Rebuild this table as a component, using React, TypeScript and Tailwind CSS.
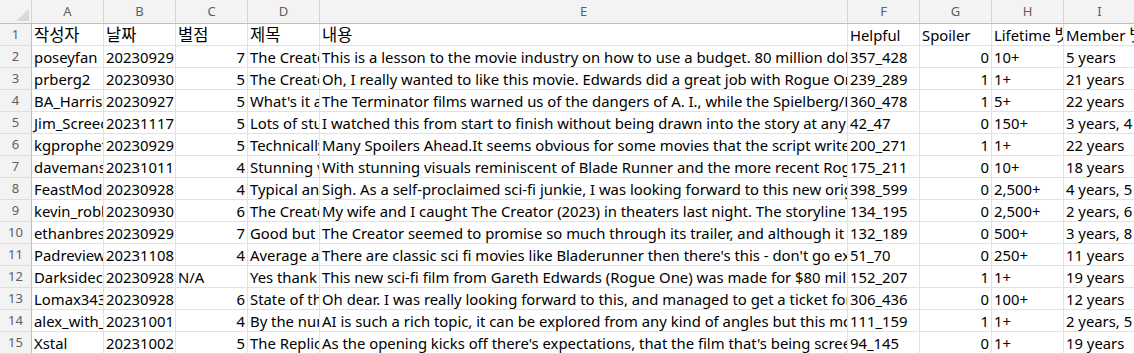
import React from "react";

const cols = ["A", "B", "C", "D", "E", "F", "G", "H", "I"];
const widths = ["w-[72px]", "w-[72px]", "w-[72px]", "w-[72px]", "w-[528px]", "w-[72px]", "w-[72px]", "w-[72px]", "w-[72px]"];

type Cell = { v: string; r?: boolean };

const header: string[] = ["작성자", "날짜", "별점", "제목", "내용", "Helpful", "Spoiler", "Lifetime 뱃지", "Member 뱃지"];

const rows: (string | number)[][] = [
  ["poseyfan", 20230929, 7, "The Creator", "This is a lesson to the movie industry on how to use a budget. 80 million dollars", "357_428", 0, "10+", "5 years"],
  ["prberg2", 20230930, 5, "The Creator", "Oh, I really wanted to like this movie. Edwards did a great job with Rogue One", "239_289", 1, "1+", "21 years"],
  ["BA_Harrison", 20230927, 5, "What's it all about", "The Terminator films warned us of the dangers of A. I., while the Spielberg/Kubrick", "360_478", 1, "5+", "22 years"],
  ["Jim_Screechy", 20231117, 5, "Lots of stunning", "I watched this from start to finish without being drawn into the story at any", "42_47", 0, "150+", "3 years, 4 months"],
  ["kgprophet", 20230929, 5, "Technically", "Many Spoilers Ahead.It seems obvious for some movies that the script writers", "200_271", 1, "1+", "22 years"],
  ["davemansell", 20231011, 4, "Stunning visuals", "With stunning visuals reminiscent of Blade Runner and the more recent Rogue One", "175_211", 0, "10+", "18 years"],
  ["FeastMode", 20230928, 4, "Typical and", "Sigh. As a self-proclaimed sci-fi junkie, I was looking forward to this new original", "398_599", 0, "2,500+", "4 years, 5 months"],
  ["kevin_robbins", 20230930, 6, "The Creator", "My wife and I caught The Creator (2023) in theaters last night. The storyline was", "134_195", 0, "2,500+", "2 years, 6 months"],
  ["ethanbresnett", 20230929, 7, "Good but", "The Creator seemed to promise so much through its trailer, and although it might", "132_189", 0, "500+", "3 years, 8 months"],
  ["Padreviews", 20231108, 4, "Average at", "There are classic sci fi movies like Bladerunner then there's this - don't go expecting", "51_70", 0, "250+", "11 years"],
  ["Darksidecritic", 20230928, "N/A", "Yes thank", "This new sci-fi film from Gareth Edwards (Rogue One) was made for $80 million", "152_207", 1, "1+", "19 years"],
  ["Lomax343", 20230928, 6, "State of the", "Oh dear. I was really looking forward to this, and managed to get a ticket for", "306_436", 0, "100+", "12 years"],
  ["alex_with_ai", 20231001, 4, "By the numbers", "AI is such a rich topic, it can be explored from any kind of angles but this movie", "111_159", 1, "1+", "2 years, 5 months"],
  ["Xstal", 20231002, 5, "The Replicant", "As the opening kicks off there's expectations, that the film that's being screened", "94_145", 0, "1+", "19 years"],
];

function toCells(r: (string | number)[]): Cell[] {
  return r.map((v, i) => {
    if (typeof v === "number" && i !== 1) return { v: String(v), r: true };
    return { v: String(v) };
  });
}

function Text({ v }: { v: string }) {
  const parts = v.split(/([\uAC00-\uD7A3]+)/);
  return (
    <span className="whitespace-nowrap">
      {parts.map((p, i) =>
        /[\uAC00-\uD7A3]/.test(p) ? (
          <span key={i} className="text-[16.5px] leading-none" style={{ fontFamily: '"Noto Sans CJK KR", sans-serif' }}>
            {p}
          </span>
        ) : (
          <React.Fragment key={i}>{p}</React.Fragment>
        )
      )}
    </span>
  );
}

export default function App() {
  const font = { fontFamily: '"Noto Sans", "Noto Sans CJK KR", sans-serif' };
  const allRows: Cell[][] = [header.map((h) => ({ v: h })), ...rows.map(toCells)];
  return (
    <div className="w-[1134px] h-[354px] overflow-hidden bg-white" style={font}>
      <div className="flex h-[24px] bg-[#f3f3f3] border-b border-[#bfbfbf] text-[13px] text-[#5f5f5f]">
        <div className="w-[32px] shrink-0 border-r border-[#d4d4d4] relative">
          <svg className="absolute left-[16px] top-[9px]" width="13" height="12" viewBox="0 0 13 12">
            <polygon points="13,0 13,12 0,12" fill="#d9d9d9" />
          </svg>
        </div>
        {cols.map((c, i) => (
          <div key={c} className={`${widths[i]} shrink-0 border-r border-[#d4d4d4] flex items-center justify-center`}>
            {c}
          </div>
        ))}
      </div>
      {allRows.map((row, ri) => (
        <div key={ri} className="flex h-[22px]">
          <div className="w-[32px] shrink-0 bg-[#f3f3f3] border-r border-b border-r-[#bfbfbf] border-b-[#dedede] text-[13px] text-[#5f5f5f] flex items-center justify-center">
            {ri + 1}
          </div>
          {row.map((cell, ci) => (
            <div
              key={ci}
              className={`${widths[ci]} shrink-0 border-r border-b border-[#e1e1e1] overflow-hidden whitespace-nowrap text-[14.85px] text-black leading-[21px] px-[2px] pt-[1px] flex items-center ${cell.r ? "justify-end" : "justify-start"}`}
            >
              <Text v={cell.v} />
            </div>
          ))}
        </div>
      ))}
    </div>
  );
}
